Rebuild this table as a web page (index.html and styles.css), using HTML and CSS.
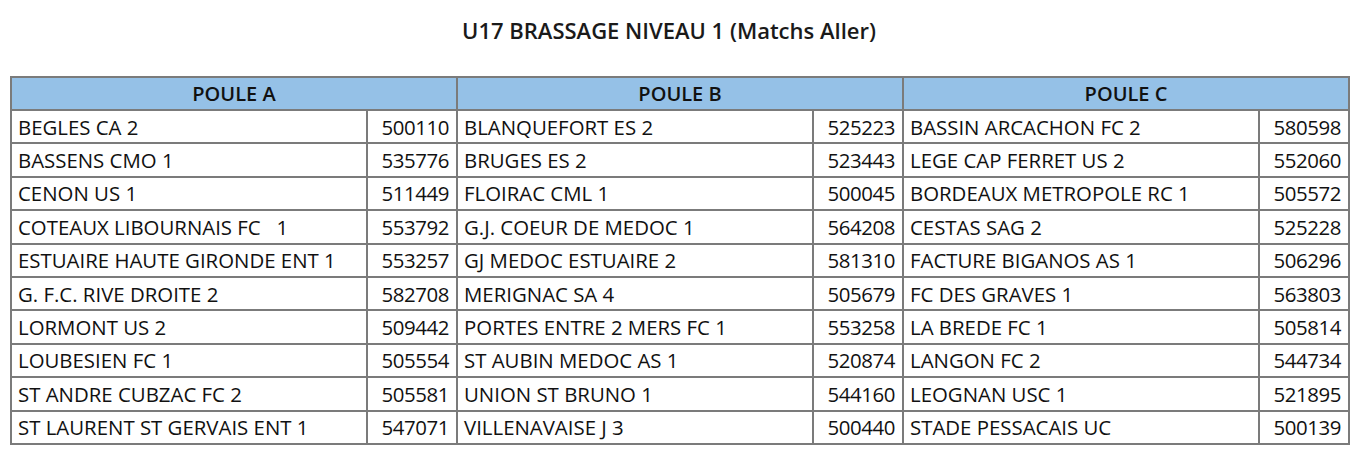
FILE: index.html
```html
<!DOCTYPE html>
<html lang="fr">
<head>
<meta charset="utf-8">
<title>U17 BRASSAGE NIVEAU 1</title>
<link rel="stylesheet" href="styles.css">
</head>
<body>
<h1 class="title">U17 BRASSAGE NIVEAU 1 (Matchs Aller)</h1>
<table class="poules">
<colgroup>
<col class="c-name"><col class="c-num">
<col class="c-name"><col class="c-num">
<col class="c-name"><col class="c-num">
</colgroup>
<thead>
<tr><th colspan="2">POULE A</th><th colspan="2">POULE B</th><th colspan="2">POULE C</th></tr>
</thead>
<tbody>
<tr><td>BEGLES CA 2</td><td class="num">500110</td><td>BLANQUEFORT ES 2</td><td class="num">525223</td><td>BASSIN ARCACHON FC 2</td><td class="num">580598</td></tr>
<tr><td>BASSENS CMO 1</td><td class="num">535776</td><td>BRUGES ES 2</td><td class="num">523443</td><td>LEGE CAP FERRET US 2</td><td class="num">552060</td></tr>
<tr><td>CENON US 1</td><td class="num">511449</td><td>FLOIRAC CML 1</td><td class="num">500045</td><td>BORDEAUX METROPOLE RC 1</td><td class="num">505572</td></tr>
<tr><td>COTEAUX LIBOURNAIS FC &nbsp;&nbsp;1</td><td class="num">553792</td><td>G.J. COEUR DE MEDOC 1</td><td class="num">564208</td><td>CESTAS SAG 2</td><td class="num">525228</td></tr>
<tr><td>ESTUAIRE HAUTE GIRONDE ENT 1</td><td class="num">553257</td><td>GJ MEDOC ESTUAIRE 2</td><td class="num">581310</td><td>FACTURE BIGANOS AS 1</td><td class="num">506296</td></tr>
<tr><td>G. F.C. RIVE DROITE 2</td><td class="num">582708</td><td>MERIGNAC SA 4</td><td class="num">505679</td><td>FC DES GRAVES 1</td><td class="num">563803</td></tr>
<tr><td>LORMONT US 2</td><td class="num">509442</td><td>PORTES ENTRE 2 MERS FC 1</td><td class="num">553258</td><td>LA BREDE FC 1</td><td class="num">505814</td></tr>
<tr><td>LOUBESIEN FC 1</td><td class="num">505554</td><td>ST AUBIN MEDOC AS 1</td><td class="num">520874</td><td>LANGON FC 2</td><td class="num">544734</td></tr>
<tr><td>ST ANDRE CUBZAC FC 2</td><td class="num">505581</td><td>UNION ST BRUNO 1</td><td class="num">544160</td><td>LEOGNAN USC 1</td><td class="num">521895</td></tr>
<tr><td>ST LAURENT ST GERVAIS ENT 1</td><td class="num">547071</td><td>VILLENAVAISE J 3</td><td class="num">500440</td><td>STADE PESSACAIS UC</td><td class="num">500139</td></tr>
</tbody>
</table>
</body>
</html>
```
FILE: styles.css
```css
html, body {
  margin: 0;
  padding: 0;
  background: #ffffff;
}
body {
  font-family: "Open Sans", "Noto Sans", sans-serif;
  color: #111111;
  padding: 0 0 0 10px;
}
.title {
  margin: 0;
  padding-top: 15px;
  height: 60px;
  box-sizing: border-box;
  text-align: center;
  font-size: 22px;
  font-weight: 600;
  line-height: 30px;
  padding-right: 39px;
  color: #1a1a1a;
}
.poules {
  border-collapse: collapse;
  width: 1338px;
  table-layout: fixed;
  margin-top: 16px;
}
.c-name { width: 356px; }
.c-num { width: 90px; }
.poules th,
.poules td {
  border: 2px solid #7b7b7b;
  font-size: 20.4px;
  line-height: 24px;
  height: 33.4px;
  box-sizing: border-box;
  padding: 0 6px;
  white-space: nowrap;
  overflow: hidden;
}
.poules th {
  background: #95c1e7;
  font-weight: 600;
  font-size: 20px;
  height: 33px;
  text-align: center;
  color: #111111;
}
.poules td.num {
  text-align: right;
  padding-right: 7px;
  letter-spacing: -0.4px;
}
```
